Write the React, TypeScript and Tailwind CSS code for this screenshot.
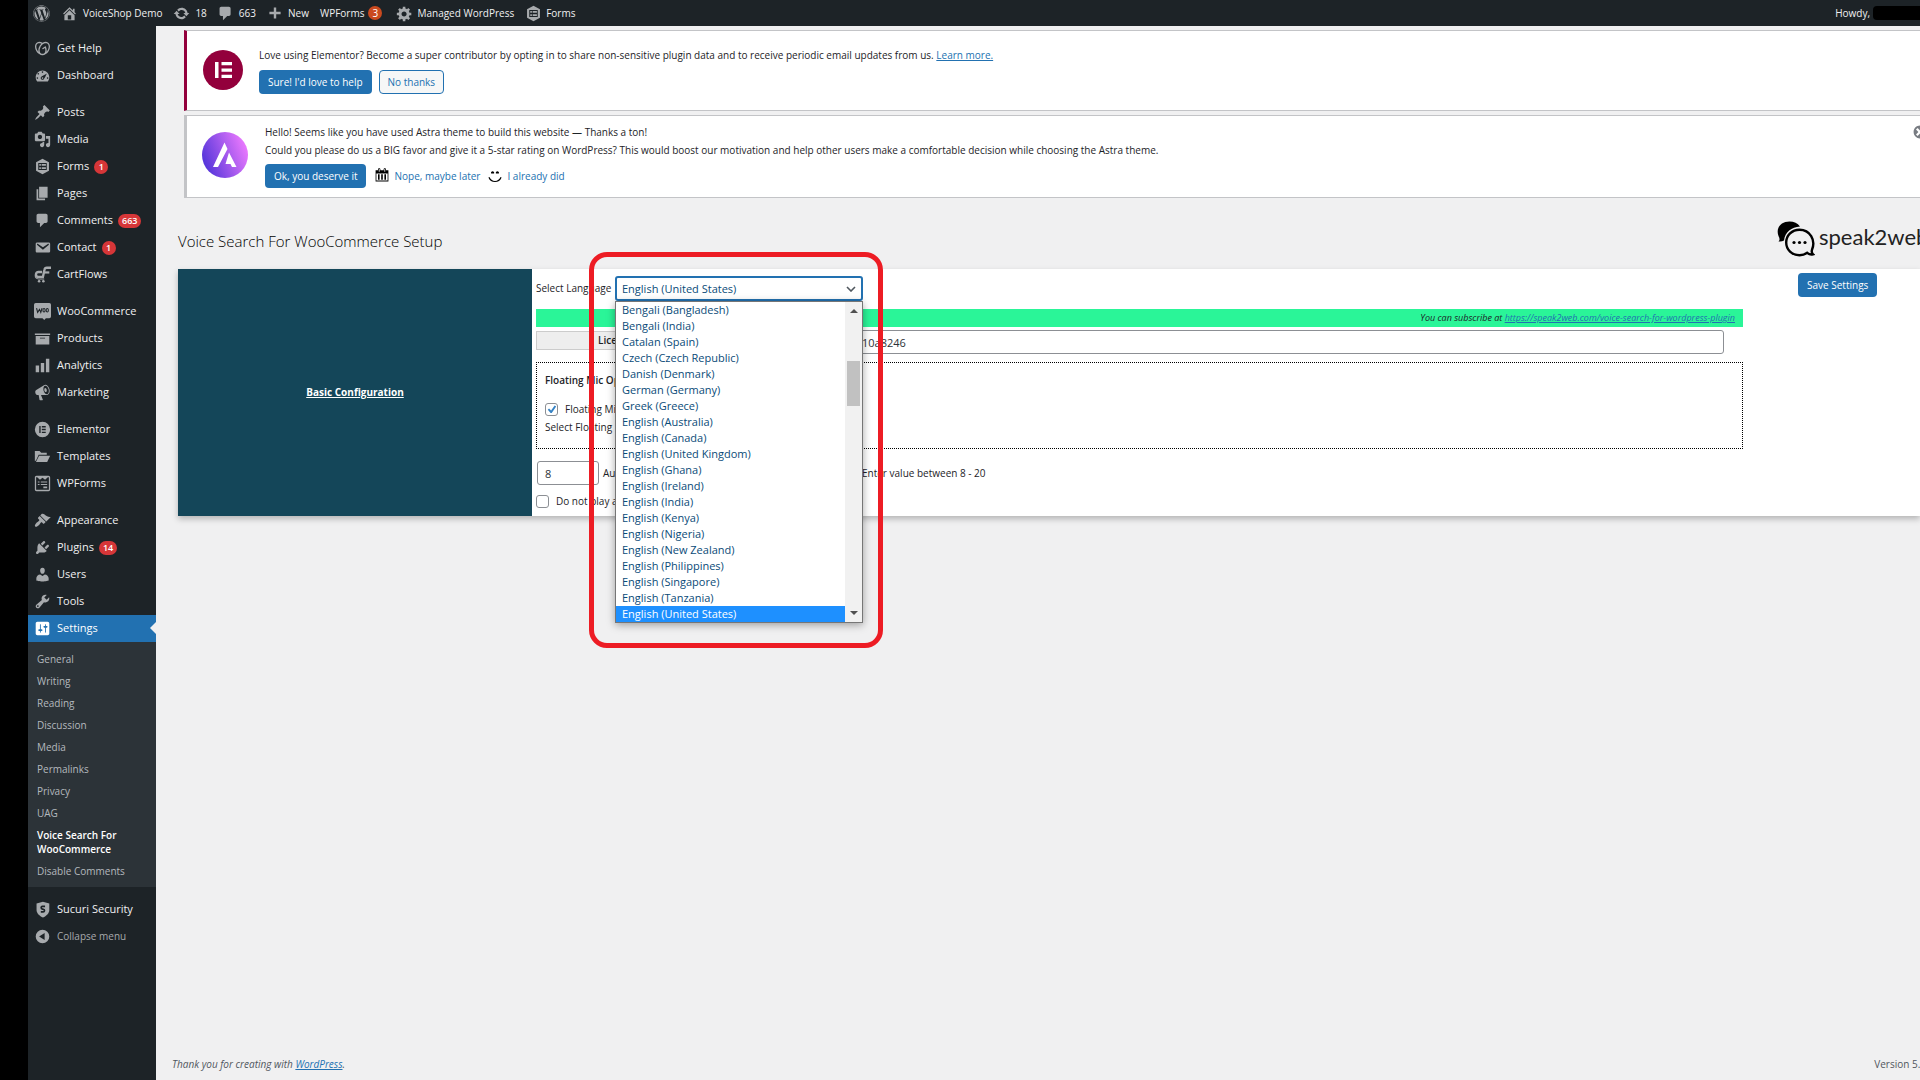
import type { ReactNode } from 'react';
import { FaWordpress } from 'react-icons/fa';
import { SiGodaddy } from 'react-icons/si';

const ICONS = {
  dashboard:
    'M3.76 17.01h12.48C17.34 15.63 18 13.9 18 12c0-4.41-3.58-8-8-8s-8 3.59-8 8c0 1.9.66 3.63 1.76 5.01zM9 6c0-.55.45-1 1-1s1 .45 1 1c0 .56-.45 1-1 1s-1-.44-1-1zM4 8c0-.55.45-1 1-1s1 .45 1 1c0 .56-.45 1-1 1s-1-.44-1-1zm4.52 3.4c.84-.83 6.51-3.5 6.51-3.5s-2.66 5.68-3.49 6.51c-.84.84-2.18.84-3.02 0-.83-.83-.83-2.18 0-3.01zM3 13c0-.55.45-1 1-1s1 .45 1 1c0 .56-.45 1-1 1s-1-.44-1-1zm6 0c0 .56.45 1 1 1s1-.44 1-1c0-.55-.45-1-1-1s-1 .45-1 1zm6 0c0-.55.45-1 1-1s1 .45 1 1c0 .56-.45 1-1 1s-1-.44-1-1z',
  pin: 'M10.44 3.02l1.82-1.82 6.36 6.35-1.83 1.82c-1.05-.68-2.48-.57-3.41.36l-.75.75c-.92.93-1.04 2.35-.35 3.41l-1.83 1.82-2.41-2.41-2.8 2.79c-.42.42-3.38 2.71-3.8 2.29s1.86-3.39 2.28-3.81l2.79-2.79L4.1 9.36l1.83-1.82c1.05.69 2.48.57 3.4-.36l.75-.75c.93-.92 1.05-2.35.36-3.41z',
  media:
    'M13 11V4c0-.55-.45-1-1-1h-1.67L9 1H5L3.67 3H2c-.55 0-1 .45-1 1v7c0 .55.45 1 1 1h10c.55 0 1-.45 1-1zM7 4.5c1.38 0 2.5 1.12 2.5 2.5S8.38 9.5 7 9.5 4.5 8.38 4.5 7 5.62 4.5 7 4.5zM14 6h5v10.5c0 1.38-1.12 2.5-2.5 2.5S14 17.88 14 16.5s1.12-2.5 2.5-2.5c.17 0 .34.02.5.05V9h-3V6zm-4 8.05V13h2v3.5c0 1.38-1.12 2.5-2.5 2.5S7 17.88 7 16.5 8.12 14 9.5 14c.17 0 .34.02.5.05z',
  forms:
    'M10 .8l7.6 4.3v9.8L10 19.2l-7.6-4.3V5.100zM5 6v8.200h10V6zM6.200 7.200h1.900v1.900H6.200zM9 7.200h5v1.900H9zM6.200 11h1.900v1.900H6.200zM9 11h5v1.900H9z',
  page: 'M6 15V2h10v13H6zm-1 1h8v2H3V5h2v11z',
  comments: 'M5 2h9c1.1 0 2 .9 2 2v7c0 1.1-.9 2-2 2h-2l-5 5v-5H5c-1.1 0-2-.9-2-2V4c0-1.1.9-2 2-2z',
  email:
    'M3.87 4h13.25C18.37 4 19 4.59 19 5.79v8.42c0 1.19-.63 1.79-1.88 1.79H3.87c-1.25 0-1.88-.6-1.88-1.79V5.79c0-1.2.63-1.79 1.88-1.79zm6.62 8.6l6.74-5.53c.24-.2.43-.66.13-1.07-.29-.41-.82-.42-1.17-.17l-5.7 3.86L4.8 5.83c-.35-.25-.88-.24-1.17.17-.3.41-.11.87.13 1.07z',
  archive: 'M19 4v2H1V4h18zM2 7h16v10H2V7zm11 3V9H7v1h6z',
  chart: 'M18 18V2h-4v16h4zm-6 0V7H8v11h4zm-6 0v-8H2v8h4z',
  megaphone:
    'M18.15 5.94c.46 1.62.38 3.22-.02 4.48-.42 1.28-1.26 2.18-2.3 2.48-.16.06-.26.06-.4.06-.06.02-.12.02-.18.02-.06.02-.14.02-.22.02h-6.8l2.22 5.5c.02.14-.06.26-.14.34-.08.1-.24.16-.34.16H6.95c-.1 0-.26-.06-.34-.16-.08-.08-.16-.2-.14-.34l-1-5.5H4.25l-.02-.02c-.5.06-1.08-.18-1.54-.62s-.88-1.08-1.06-1.88c-.24-.8-.2-1.56-.02-2.2.18-.62.58-1.08 1.06-1.3l.02-.02 9-5.4c.1-.06.18-.1.24-.16.06-.04.14-.08.24-.12.16-.08.28-.12.5-.18 1.04-.3 2.24.1 3.22.98s1.84 2.24 2.26 3.86zm-2.58 5.98h-.02c.4-.1.74-.34 1.04-.7.58-.7.86-1.76.86-3.04 0-.64-.1-1.3-.28-1.98-.34-1.36-1.02-2.5-1.78-3.24s-1.68-1.1-2.46-.88c-.82.22-1.4.96-1.7 2-.32 1.04-.28 2.36.06 3.72.38 1.36 1 2.5 1.8 3.24.78.74 1.62 1.1 2.48.88zm-2.54-7.08c.22-.04.42-.02.62.04.38.16.76.48 1.02 1s.42 1.2.42 1.78c0 .3-.04.56-.12.8-.18.48-.44.84-.86.94-.34.1-.8-.06-1.14-.4s-.64-.86-.78-1.5c-.18-.62-.12-1.24.02-1.72s.48-.84.82-.94z',
  elementor:
    'M10 1a9 9 0 100 18 9 9 0 000-18zM6.200 6h1.600v8H6.200zM9.200 6h4.600v1.500H9.200zM9.200 9.250h4.600v1.500H9.200zM9.200 12.500h4.600V14H9.200z',
  folder: 'M1 3.500h5.500l2 2H15V8H5.500L2.500 14.500 1 15.500zM6 9h13l-3.500 7.500H2.300z',
  wpforms:
    'M3 1h14c1.100 0 2 .9 2 2v14c0 1.100-.9 2-2 2H3c-1.100 0-2-.9-2-2V3c0-1.100.9-2 2-2zm-.5 1.700v14.600h15V2.700h-1.200L13 5.500l-3-2.200-3 2.200-3.300-2.800zM4.500 7.500h2v1.200h-2zM8 7.500h7.500v1.200H8zM4.500 10.500h2v1.200h-2zM8 10.500h7.500v1.200H8zM11 13.500h4.500v2H11z',
  appearance:
    'M14.48 11.06L7.41 3.99l1.5-1.5c.5-.56 2.3-.47 3.51.32 1.21.8 1.43 1.28 2.91 2.1 1.18.64 2.45 1.26 4.45.85zm-.71.71L6.7 4.7 4.93 6.47c-.39.39-.39 1.02 0 1.41l1.06 1.06c.39.39.39 1.03 0 1.42-.6.6-1.43 1.11-2.21 1.69-.35.26-.7.53-1.01.84C1.43 14.23.4 16.08 1.4 17.07c.99 1 2.84-.03 4.18-1.36.31-.31.58-.66.85-1.02.57-.78 1.08-1.61 1.69-2.21.39-.39 1.02-.39 1.41 0l1.06 1.06c.39.39 1.02.39 1.41 0z',
  plugins:
    'M13.11 4.36L9.87 7.6 8 5.73l3.24-3.24c.35-.34 1.05-.2 1.56.32.52.51.66 1.21.31 1.55zm-8 1.77l.91-1.12 9.01 9.01-1.19.84c-.71.71-2.63 1.16-3.82 1.16H6.14L4.9 17.26c-.59.59-1.54.59-2.12 0-.59-.58-.59-1.53 0-2.12l1.24-1.24v-3.88c0-1.13.4-3.19 1.09-3.89zm7.26 3.97l3.24-3.24c.34-.35 1.04-.21 1.55.31.52.51.66 1.21.31 1.55l-3.24 3.25z',
  users:
    'M10 9.25c-2.27 0-2.73-3.44-2.73-3.44C7 4.02 7.82 2 9.97 2c2.16 0 2.98 2.02 2.71 3.81 0 0-.41 3.44-2.68 3.44zm0 2.57L12.72 10c2.39 0 4.52 2.33 4.52 4.53v2.49s-3.65 1.13-7.24 1.13c-3.65 0-7.24-1.13-7.24-1.13v-2.49c0-2.25 1.94-4.48 4.47-4.48z',
  tools:
    'M16.68 9.77c-1.34 1.34-3.3 1.67-4.95.99l-5.41 6.52c-.99.99-2.59.99-3.58 0s-.99-2.59 0-3.57l6.52-5.42c-.68-1.65-.35-3.61.99-4.95 1.28-1.28 3.12-1.62 4.72-1.06l-2.89 2.89 2.82 2.82 2.86-2.87c.53 1.58.18 3.39-1.08 4.65zM3.81 16.21c.4.39 1.04.39 1.43 0 .4-.4.4-1.04 0-1.43-.39-.4-1.03-.4-1.43 0-.39.39-.39 1.03 0 1.43z',
  settings:
    'M18 16V4c0-1.1-.9-2-2-2H4c-1.1 0-2 .9-2 2v12c0 1.1.9 2 2 2h12c1.1 0 2-.9 2-2zM8 11h1c.55 0 1 .45 1 1s-.45 1-1 1H8v1.5c0 .28-.22.5-.5.5s-.5-.22-.5-.5V13H6c-.55 0-1-.45-1-1s.45-1 1-1h1V5.5c0-.28.22-.5.5-.5s.5.22.5.5V11zm5-2h-1c-.55 0-1-.45-1-1s.45-1 1-1h1V5.5c0-.28.22-.5.5-.5s.5.22.5.5V7h1c.55 0 1 .45 1 1s-.45 1-1 1h-1v5.500c0 .28-.22.5-.5.5s-.5-.22-.5-.5V9z',
  collapse: 'M10 2a8 8 0 110 16 8 8 0 010-16zm2.500 4L6 10l6.500 4z',
  home: 'M16 8.5l1.53 1.53-1.06 1.06L10 4.6l-6.47 6.49-1.06-1.06L10 2.5l4 4v-2h2v4zm-6-2.46l6 5.99V18H4v-5.97zM12 17v-5H8v5h4z',
  update:
    'M10.2 3.28c3.53 0 6.43 2.61 6.92 6h2.08l-3.5 4-3.5-4h2.32c-.45-1.97-2.21-3.45-4.32-3.45-1.45 0-2.73.71-3.54 1.78L4.95 5.66C6.23 4.2 8.11 3.28 10.2 3.28zm-.4 13.44c-3.52 0-6.43-2.61-6.92-6H.8l3.5-4c1.17 1.33 2.33 2.67 3.5 4H5.48c.45 1.97 2.21 3.45 4.32 3.45 1.45 0 2.73-.71 3.54-1.78l1.71 1.95c-1.28 1.46-3.15 2.38-5.25 2.38z',
  plus: 'M17 8.500v3h-5.500V17h-3v-5.500H3v-3h5.500V3h3v5.500z',
  generic:
    'M18 12h-2.18c-.17.7-.44 1.35-.81 1.93l1.54 1.54-2.1 2.1-1.54-1.54c-.58.36-1.23.63-1.91.79V19H8v-2.18c-.68-.16-1.33-.43-1.91-.79l-1.54 1.54-2.12-2.12 1.54-1.54c-.36-.58-.63-1.23-.79-1.91H1V9.03h2.17c.16-.7.44-1.35.8-1.94L2.43 5.55l2.1-2.1 1.54 1.54c.58-.37 1.24-.64 1.93-.81V2h3v2.18c.68.16 1.33.43 1.91.79l1.54-1.54 2.12 2.12-1.54 1.54c.36.59.64 1.24.8 1.94H18V12zm-8.5 1.5c1.66 0 3-1.34 3-3s-1.34-3-3-3-3 1.34-3 3 1.34 3 3 3z',
  calendar:
    'M15 4h3v14H2V4h3V3c0-.83.67-1.5 1.5-1.5S8 2.17 8 3v1h4V3c0-.83.67-1.5 1.5-1.5S15 2.17 15 3v1zM6 3v2.5c0 .28.22.5.5.5s.5-.22.5-.5V3c0-.28-.22-.5-.5-.5S6 2.72 6 3zm7 0v2.5c0 .28.22.5.5.5s.5-.22.5-.5V3c0-.28-.22-.5-.5-.5s-.5.22-.5.5zm4 14V8H3v9h14zM7 16V9H5v7h2zm4 0V9H9v7h2zm4 0V9h-2v7h2z',
  smiley:
    'M7 5.2c1.1 0 2 .89 2 2 0 .37-.11.71-.28 1C8.72 8.2 8 8 7 8s-1.72.2-1.72.2c-.17-.29-.28-.63-.28-1 0-1.11.9-2 2-2zm6 0c1.11 0 2 .89 2 2 0 .37-.11.71-.28 1 0 0-.72-.2-1.72-.2s-1.72.2-1.72.2c-.17-.29-.28-.63-.28-1 0-1.11.89-2 2-2zm-3 13.7c3.72 0 7.03-2.36 8.23-5.88l-1.32-.46C15.9 15.52 13.12 17.5 10 17.5s-5.9-1.98-6.91-4.94l-1.32.46c1.2 3.52 4.51 5.88 8.23 5.88z',
  dismiss:
    'M10 2c4.420 0 8 3.580 8 8s-3.580 8-8 8-8-3.580-8-8 3.580-8 8-8zm5 11l-3-3 3-3-2-2-3 3-3-3-2 2 3 3-3 3 2 2 3-3 3 3z',
};

type IconName = keyof typeof ICONS;

function Icon({ name, className = 'size-[17px]' }: { name: IconName; className?: string }) {
  return (
    <svg viewBox="0 0 20 20" className={`shrink-0 ${className}`} fill="currentColor" fillRule="evenodd" aria-hidden="true">
      <path d={ICONS[name]} />
    </svg>
  );
}

function CartFlowsIcon() {
  return (
    <svg viewBox="0 0 20 20" className="size-[17px] shrink-0" fill="none" stroke="currentColor" aria-hidden="true">
      <path d="M9.500 7H5.200a2.700 2.700 0 000 5.800h5.300L12.300 4.300C12.600 2.700 13.500 2 15 2h5" strokeWidth="2.800" />
      <path d="M12 7.600h6" strokeWidth="2.600" />
      <path d="M1.500 10.300C1 14 3 15.200 5.500 15.200h6.500" strokeWidth="1.200" />
      <circle cx="6" cy="18" r="1.500" fill="currentColor" stroke="none" />
      <circle cx="11" cy="18" r="1.500" fill="currentColor" stroke="none" />
    </svg>
  );
}

function WooIcon() {
  return (
    <svg viewBox="0 0 20 20" className="size-[17px] shrink-0" aria-hidden="true">
      <path d="M2 0h16a2 2 0 012 2v14a2 2 0 01-2 2h-4l-2 2-2-2H2a2 2 0 01-2-2V2a2 2 0 012-2z" fill="currentColor" />
      <path d="M3 6l1.300 5L6.500 7.500 8 11l1.500-5" fill="none" stroke="#1d2327" strokeWidth="1.300" />
      <ellipse cx="11.800" cy="8.600" rx="1.300" ry="2" fill="none" stroke="#1d2327" strokeWidth="1.200" />
      <ellipse cx="15.600" cy="8.600" rx="1.300" ry="2" fill="none" stroke="#1d2327" strokeWidth="1.200" />
    </svg>
  );
}

function SucuriIcon() {
  return (
    <svg viewBox="0 0 20 20" className="size-[17px] shrink-0" aria-hidden="true">
      <path d="M10.500 1l7.500 1.800v7.700c0 4-3.500 6.800-7.500 9-4-2.200-7.500-5-7.500-9V2.800z" fill="currentColor" />
      <path d="M13 6.300H9.800c-1.800 0-1.800 2.900.2 3.200l1 .2c2 .4 1.700 3.100-.2 3.100H8" fill="none" stroke="#1d2327" strokeWidth="2" />
    </svg>
  );
}

type MenuItem = { label: string; icon: ReactNode; count?: string };

const menuGroups: MenuItem[][] = [
  [
    { label: 'Get Help', icon: <SiGodaddy className="m-px size-[15px] shrink-0" /> },
    { label: 'Dashboard', icon: <Icon name="dashboard" /> },
  ],
  [
    { label: 'Posts', icon: <Icon name="pin" /> },
    { label: 'Media', icon: <Icon name="media" /> },
    { label: 'Forms', icon: <Icon name="forms" />, count: '1' },
    { label: 'Pages', icon: <Icon name="page" /> },
    { label: 'Comments', icon: <Icon name="comments" />, count: '663' },
    { label: 'Contact', icon: <Icon name="email" />, count: '1' },
    { label: 'CartFlows', icon: <CartFlowsIcon /> },
  ],
  [
    { label: 'WooCommerce', icon: <WooIcon /> },
    { label: 'Products', icon: <Icon name="archive" /> },
    { label: 'Analytics', icon: <Icon name="chart" /> },
    { label: 'Marketing', icon: <Icon name="megaphone" /> },
  ],
  [
    { label: 'Elementor', icon: <Icon name="elementor" /> },
    { label: 'Templates', icon: <Icon name="folder" /> },
    { label: 'WPForms', icon: <Icon name="wpforms" /> },
  ],
  [
    { label: 'Appearance', icon: <Icon name="appearance" /> },
    { label: 'Plugins', icon: <Icon name="plugins" />, count: '14' },
    { label: 'Users', icon: <Icon name="users" /> },
    { label: 'Tools', icon: <Icon name="tools" /> },
  ],
];

const settingsPages = [
  'General',
  'Writing',
  'Reading',
  'Discussion',
  'Media',
  'Permalinks',
  'Privacy',
  'UAG',
  'Voice Search For WooCommerce',
  'Disable Comments',
];

const languages = [
  'Bengali (Bangladesh)',
  'Bengali (India)',
  'Catalan (Spain)',
  'Czech (Czech Republic)',
  'Danish (Denmark)',
  'German (Germany)',
  'Greek (Greece)',
  'English (Australia)',
  'English (Canada)',
  'English (United Kingdom)',
  'English (Ghana)',
  'English (Ireland)',
  'English (India)',
  'English (Kenya)',
  'English (Nigeria)',
  'English (New Zealand)',
  'English (Philippines)',
  'English (Singapore)',
  'English (Tanzania)',
  'English (United States)',
];

const selectedLanguage = 'English (United States)';

function AdminBar() {
  return (
    <header className="flex h-[26px] items-center bg-[#1d2327] pl-[5px] text-[10px] text-[#f0f0f1]">
      <a href="#about" aria-label="About WordPress" className="text-[#a7aaad]">
        <FaWordpress className="size-[17px]" />
      </a>
      <a href="#site" className="ml-[11px] flex items-center gap-[5px]">
        <Icon name="home" className="size-[17px] text-[#a7aaad]" />
        VoiceShop Demo
      </a>
      <a href="#updates" className="ml-[11px] flex items-center gap-[5px]">
        <Icon name="update" className="size-[17px] text-[#a7aaad]" />
        18
      </a>
      <a href="#comments" className="ml-[10px] flex items-center gap-[5px]">
        <Icon name="comments" className="size-[17px] text-[#a7aaad]" />
        663
      </a>
      <a href="#new" className="ml-[11px] flex items-center gap-[5px]">
        <Icon name="plus" className="size-4 text-[#a7aaad]" />
        New
      </a>
      <a href="#wpforms" className="ml-[11px] flex items-center gap-1">
        WPForms
        <span className="flex h-[14px] w-[14px] items-center justify-center rounded-full bg-[#ca4a1f] text-white">3</span>
      </a>
      <a href="#managed" className="ml-[14px] flex items-center gap-1">
        <Icon name="generic" className="size-[17px] text-[#a7aaad]" />
        Managed WordPress
      </a>
      <a href="#forms" className="ml-[11px] flex items-center gap-1">
        <Icon name="forms" className="size-[17px] text-[#a7aaad]" />
        Forms
      </a>
      <div className="ml-auto flex items-center gap-[3px]">
        Howdy,
        <span className="h-[14px] w-[47px] rounded-l bg-black" />
      </div>
    </header>
  );
}

function CountBadge({ count }: { count: string }) {
  return (
    <span className="-ml-px flex h-[14px] min-w-[14px] items-center justify-center rounded-full bg-[#d63638] px-1 text-[9px] font-semibold text-white">
      {count}
    </span>
  );
}

function Sidebar() {
  return (
    <nav className="w-32 shrink-0 bg-[#1d2327] pt-[9px] text-[11px] text-[#f0f0f1]" aria-label="Main menu">
      {menuGroups.map((group, i) => (
        <ul key={i} className={i < menuGroups.length - 1 ? 'mb-[10px]' : ''}>
          {group.map(item => (
            <li key={item.label}>
              <a href="#menu" className="flex h-[27px] items-center gap-[6px] pl-[6px]">
                <span className="text-[#a7aaad]">{item.icon}</span>
                {item.label}
                {item.count && <CountBadge count={item.count} />}
              </a>
            </li>
          ))}
        </ul>
      ))}

      <a href="#settings" className="relative flex h-[27px] items-center gap-[6px] bg-[#2271b1] pl-[6px] text-white">
        <Icon name="settings" />
        Settings
        <span className="absolute right-0 top-[7px] border-y-[6px] border-r-[6px] border-y-transparent border-r-[#f0f0f1]" />
      </a>
      <ul className="mb-[9px] bg-[#2c3338] pb-[5px] pt-[6px] text-[10px] leading-[14px] text-[#b4b9be]">
        {settingsPages.map(page => (
          <li key={page}>
            <a
              href="#page"
              className={`block py-1 pl-[9px] ${page.startsWith('Voice') ? 'pr-6 font-semibold text-white' : ''}`}
            >
              {page}
            </a>
          </li>
        ))}
      </ul>

      <a href="#sucuri" className="flex h-[27px] items-center gap-[6px] pl-[6px]">
        <span className="text-[#a7aaad]"><SucuriIcon /></span>
        Sucuri Security
      </a>
      <button type="button" className="flex h-[27px] items-center gap-[6px] pl-[6px] text-[10px] text-[#a7aaad]">
        <Icon name="collapse" />
        Collapse menu
      </button>
    </nav>
  );
}

function ElementorNotice() {
  return (
    <section className="ml-7 mt-1 flex h-[81px] border border-r-0 border-l-[3px] border-[#c3c4c7] border-l-[#93003c] bg-white pl-4 pt-[19px]">
      <svg viewBox="0 0 40 40" className="size-10 shrink-0" aria-label="Elementor">
        <circle cx="20" cy="20" r="20" fill="#93003c" />
        <path d="M12 12h3.500v16H12zM18.500 12H29v3.300H18.500zM18.500 18.400H29v3.300H18.500zM18.500 24.700H29V28H18.500z" fill="#fff" />
      </svg>
      <div className="-mt-[3px] ml-4 flex flex-col gap-[7px]">
        <p className="leading-4">
          Love using Elementor? Become a super contributor by opting in to share non-sensitive plugin data and to receive periodic email updates from us.{' '}
          <a href="#learn" className="text-[#2271b1] underline">Learn more.</a>
        </p>
        <div className="flex gap-[7px]">
          <button type="button" className="h-6 rounded-sm bg-[#2271b1] px-[9px] text-white">Sure! I'd love to help</button>
          <button type="button" className="h-6 rounded-sm border border-[#2271b1] bg-[#f6f7f7] px-2 text-[#2271b1]">No thanks</button>
        </div>
      </div>
    </section>
  );
}

function AstraNotice() {
  return (
    <section className="relative ml-7 mt-1 flex h-[83px] border border-r-0 border-l-[3px] border-[#c3c4c7] bg-white pl-[15px] pt-2">
      <svg viewBox="0 0 46 46" className="mt-2 size-[46px] shrink-0" aria-label="Astra">
        <defs>
          <linearGradient id="astra" x1="0" y1="0.700" x2="1" y2="0.300">
            <stop offset="0" stopColor="#4f33d9" />
            <stop offset="1" stopColor="#ef7bff" />
          </linearGradient>
        </defs>
        <circle cx="23" cy="23" r="23" fill="url(#astra)" />
        <path d="M22.500 10.500l3 6.500-9.500 18H11zM27 20.500L34.500 35H30l-1.500-3h-5z" fill="#fff" />
      </svg>
      <div className="ml-[17px]">
        <p className="leading-4">Hello! Seems like you have used Astra theme to build this website — Thanks a ton!</p>
        <p className="mt-[2px] leading-4">
          Could you please do us a BIG favor and give it a 5-star rating on WordPress? This would boost our motivation and help other users make a comfortable decision while choosing the Astra theme.
        </p>
        <div className="mt-[6px] flex items-center text-[#2271b1]">
          <button type="button" className="h-6 rounded-sm bg-[#2271b1] px-[9px] text-white">Ok, you deserve it</button>
          <Icon name="calendar" className="mb-[2px] ml-2 size-4 text-black" />
          <a href="#later" className="ml-1">Nope, maybe later</a>
          <Icon name="smiley" className="mb-[2px] ml-[7px] size-4 text-black" />
          <a href="#done" className="ml-1">I already did</a>
        </div>
      </div>
      <button type="button" aria-label="Dismiss this notice" className="absolute -right-2 top-2 text-[#787c82]">
        <Icon name="dismiss" className="size-4" />
      </button>
    </section>
  );
}

function Speak2WebLogo() {
  return (
    <div className="flex w-[143px] shrink-0 items-start gap-1">
      <svg viewBox="0 0 38 36" className="h-9 w-[38px] shrink-0" aria-hidden="true">
        <path d="M1.500 20.500C3 19 2.800 17.500 1.500 15-1.500 7 4 .5 12.500.5c4.500 0 8.200 1.800 10.500 5C14.500 6 8 11 7 19.500c-1.500 1-3.500 1.300-5.500 1z" />
        <path
          d="M36 33.300c-1.200-1.200-1.600-2.600-1-4.500C39 19 33 8.700 22.500 8.700c-7.500 0-13.300 5.600-13.300 12.800s5.800 12.700 13.300 12.700c3.200 0 5.800-1 7.700-2.400 1.700 1.500 3.700 2 5.800 1.500z"
          fill="none"
          stroke="#000"
          strokeWidth="2.400"
        />
        <circle cx="17" cy="21.500" r="1.600" />
        <circle cx="22.500" cy="21.500" r="1.600" />
        <circle cx="28" cy="21.500" r="1.600" />
      </svg>
      <span className="font-['Lato',sans-serif] text-[22px] leading-8 text-[#222]">speak2web</span>
    </div>
  );
}

function LanguagePicker() {
  return (
    <div className="flex h-[25px] items-center">
      <label htmlFor="language" className="w-[79px] whitespace-nowrap">Select Language</label>
      <div className="relative w-[248px]">
        <select
          id="language"
          defaultValue={selectedLanguage}
          className="block h-[25px] w-full appearance-none rounded-[3px] border-2 border-[#2271b1] bg-white pl-[5px] pt-px text-[11px] text-[#0a4b78]"
        >
          {languages.map(language => (
            <option key={language}>{language}</option>
          ))}
        </select>
        <svg viewBox="0 0 10 6" className="absolute right-[7px] top-[10px] h-[6px] w-[10px]" fill="none" stroke="#50575e" strokeWidth="1.600" aria-hidden="true">
          <path d="M1 1l4 4 4-4" />
        </svg>

        {/* Open option list */}
        <div className="absolute left-0 top-[25px] z-10 flex w-full border border-[#767676] bg-white shadow-[0_2px_8px_rgba(0,0,0,0.35)]">
          <ul className="flex-1 text-[11px] leading-4 text-[#0a4b78]">
            {languages.map(language => (
              <li key={language} className={`pl-[6px] ${language === selectedLanguage ? 'bg-[#1e90ff] text-white' : ''}`}>
                {language}
              </li>
            ))}
          </ul>
          <div className="flex w-[17px] flex-col items-center bg-[#f1f1f1] py-[7px]">
            <span className="border-x-4 border-b-4 border-x-transparent border-b-[#505050]" />
            <span className="mt-12 h-[45px] w-[13px] bg-[#c1c1c1]" />
            <span className="mt-auto border-x-4 border-t-4 border-x-transparent border-t-[#505050]" />
          </div>
        </div>

        {/* Highlight frame around the picker */}
        <div className="pointer-events-none absolute -left-[26px] -top-6 z-20 h-[396px] w-[294px] rounded-[18px] border-[5px] border-[#ed1c24]" />
      </div>
    </div>
  );
}

function Checkbox({ checked = false }: { checked?: boolean }) {
  return (
    <span className="relative size-[13px]">
      <input type="checkbox" defaultChecked={checked} className="block size-[13px] appearance-none rounded-[3px] border border-[#8c8f94] bg-white" />
      {checked && (
        <svg viewBox="0 0 20 20" className="absolute left-0 top-0 size-[13px]" fill="#3582c4" aria-hidden="true">
          <path d="M14.830 3.890l2.340 1.340-6.810 9.980H8.620L4.280 10.270l1.940-1.750 3.170 2.900z" />
        </svg>
      )}
    </span>
  );
}

function SetupForm() {
  return (
    <form className="min-w-0 flex-1 pl-1 pt-[7px]">
      <LanguagePicker />

      <p className="mt-2 h-[18px] bg-[#2af598] pr-2 text-right text-[9px] italic leading-[18px]">
        You can subscribe at{' '}
        <a href="#subscribe" className="text-[#2271b1] underline">https://speak2web.com/voice-search-for-wordpress-plugin</a>
      </p>

      <div className="mt-[3px] flex items-start pr-[19px]">
        <label htmlFor="license" className="mt-px h-[19px] w-[180px] border border-[#ccc] bg-[#eee] pl-[61px] font-semibold leading-[17px]">
          License Key
        </label>
        <input
          id="license"
          type="text"
          defaultValue="10a8246"
          className="h-6 min-w-0 flex-1 rounded-[3px] border border-[#8c8f94] bg-white pl-[145px] text-[11px] text-[#2c3338]"
        />
      </div>

      <fieldset className="mt-2 h-[87px] border border-dotted border-black pl-2">
        <p className="pt-[9px] font-semibold leading-4">Floating Mic Options</p>
        <label className="mt-[13px] flex items-center gap-[7px] leading-4">
          <Checkbox checked />
          Floating Mic
        </label>
        <p className="mt-[2px] leading-4">Select Floating Mic Position</p>
      </fieldset>

      <div className="mt-3 flex items-center pl-px">
        <input
          id="timeout"
          type="number"
          defaultValue={8}
          className="h-6 w-[62px] appearance-none rounded-[3px] border border-[#8c8f94] bg-white pl-[7px] text-[11px] text-[#2c3338]"
        />
        <label htmlFor="timeout" className="flex pl-1">
          <span className="w-[259px]">Auto timeout duration (in seconds)</span>
          <span>Enter value between 8 - 20</span>
        </label>
      </div>

      <label className="mt-2 flex items-center gap-[7px] leading-4">
        <Checkbox />
        Do not play audio messages
      </label>
    </form>
  );
}

export default function App() {
  return (
    <div className="flex min-h-screen overflow-hidden bg-black font-['Open_Sans','Noto_Sans',sans-serif] text-[10px] text-[#1d2327]">
      <div className="ml-7 flex min-w-0 flex-1 flex-col">
        <AdminBar />
        <div className="flex flex-1">
          <Sidebar />
          <main className="flex min-w-0 flex-1 flex-col bg-[#f0f0f1]">
            <ElementorNotice />
            <AstraNotice />

            <div className="flex items-start pl-[22px] pt-[23px]">
              <h1 className="flex-1 pt-2 text-[15px] font-light leading-6 text-black">Voice Search For WooCommerce Setup</h1>
              <Speak2WebLogo />
            </div>

            <div className="ml-[22px] mt-3 flex h-[247px] bg-white shadow-[0_3px_6px_rgba(0,0,0,0.25)]">
              <div className="flex w-[354px] shrink-0 items-center justify-center bg-[#144659]">
                <a href="#basic" className="font-bold text-white underline">Basic Configuration</a>
              </div>
              <SetupForm />
              <div className="w-[177px] shrink-0 pl-[55px] pt-1">
                <button type="submit" className="h-6 rounded-sm bg-[#2271b1] px-[9px] text-white">Save Settings</button>
              </div>
            </div>

            <footer className="mt-auto flex justify-between pb-2 pl-4 leading-4 text-[#50575e]">
              <p className="italic">
                Thank you for creating with <a href="#wordpress" className="text-[#2271b1] underline">WordPress</a>.
              </p>
              <p className="-mr-[6px] whitespace-nowrap">Version 5.8</p>
            </footer>
          </main>
        </div>
      </div>
    </div>
  );
}
